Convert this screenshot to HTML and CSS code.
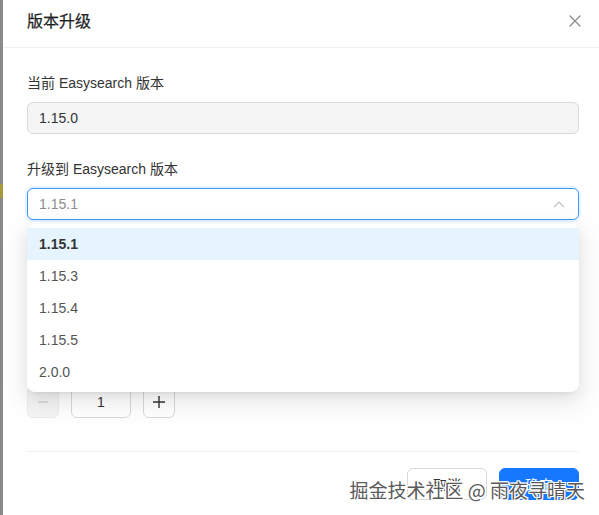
FILE: index.html
```html
<!DOCTYPE html>
<html lang="zh-CN">
<head>
<meta charset="utf-8">
<title>版本升级</title>
<link rel="stylesheet" href="styles.css">
</head>
<body>
<div class="backdrop"><span class="backdrop-mark"></span></div>
<div class="modal">
  <div class="modal-header">
    <div class="modal-title">版本升级</div>
    <button class="modal-close" aria-label="关闭">
      <svg width="12" height="12" viewBox="0 0 12 12"><path d="M1 1L11 11M11 1L1 11" stroke="#8c8c8c" stroke-width="1.3" fill="none" stroke-linecap="round"/></svg>
    </button>
  </div>
  <div class="modal-body">
    <div class="form-item">
      <div class="form-label">当前 Easysearch 版本</div>
      <div class="input input-disabled">1.15.0</div>
    </div>
    <div class="form-item">
      <div class="form-label">升级到 Easysearch 版本</div>
      <div class="select-wrap">
        <div class="select select-open">
          <span class="select-value">1.15.1</span>
          <svg class="select-arrow" width="12" height="8" viewBox="0 0 12 8"><path d="M1 7L6 2L11 7" stroke="#bfbfbf" stroke-width="1.2" fill="none"/></svg>
        </div>
        <div class="dropdown">
          <div class="option option-active">1.15.1</div>
          <div class="option">1.15.3</div>
          <div class="option">1.15.4</div>
          <div class="option">1.15.5</div>
          <div class="option">2.0.0</div>
        </div>
      </div>
    </div>
    <!-- rows that sit under the open dropdown -->
    <div class="form-item form-item-covered"></div>
    <div class="form-item form-item-stepper">
      <div class="stepper">
        <button class="step-btn step-disabled">
          <svg width="12" height="12" viewBox="0 0 12 12"><path d="M1 6H11" stroke="#d0d0d0" stroke-width="1.4"/></svg>
        </button>
        <div class="step-input">1</div>
        <button class="step-btn">
          <svg width="14" height="14" viewBox="0 0 14 14"><path d="M1 7H13M7 1V13" stroke="#333" stroke-width="1.4"/></svg>
        </button>
      </div>
    </div>
  </div>
  <div class="modal-footer">
    <button class="btn">取消</button>
    <button class="btn btn-primary">确定</button>
  </div>
  <div class="watermark">掘金技术社区 @ 雨夜寻晴天</div>
</div>
</body>
</html>
```
FILE: styles.css
```css
* { box-sizing: border-box; }

html, body {
  margin: 0;
  height: 100%;
}

body {
  display: flex;
  font-family: "Liberation Sans", "Noto Sans CJK SC", sans-serif;
  font-size: 14px;
  color: #262626;
  background: #fff;
  overflow: hidden;
}

.backdrop {
  width: 3px;
  flex: none;
  background: #8a8a8a;
  position: relative;
}

.backdrop-mark {
  position: absolute;
  left: 0;
  top: 184px;
  width: 3px;
  height: 14px;
  background: #a89a3a;
}

.modal {
  flex: 1;
  background: #fff;
  position: relative;
  display: flex;
  flex-direction: column;
}

.modal-header {
  height: 48px;
  padding: 9px 18px 0 24px;
  display: flex;
  justify-content: space-between;
  align-items: flex-start;
  border-bottom: 1px solid #f0f0f0;
}

.modal-title {
  font-family: "Noto Sans CJK SC", sans-serif;
  font-size: 16px;
  line-height: 22px;
  font-weight: 400;
  color: #1f1f1f;
  -webkit-text-stroke: 0.25px #1f1f1f;
}

.modal-close {
  border: 0;
  background: none;
  padding: 0;
  margin-top: 6px;
  width: 12px;
  height: 12px;
  display: flex;
}

.modal-body {
  padding: 24px 20px 0 24px;
}

.form-item {
  margin-bottom: 24px;
}

.form-item-covered {
  height: 88px;
}

.form-item-stepper {
  padding-top: 30px;
}

.form-label {
  line-height: 22px;
  padding-bottom: 8px;
  color: #333;
}

.input {
  height: 32px;
  border: 1px solid #d9d9d9;
  border-radius: 6px;
  padding: 0 11px;
  line-height: 30px;
  color: #333;
}

.input-disabled {
  background: #f5f5f5;
  color: #333;
}

.select-wrap {
  position: relative;
}

.select {
  height: 32px;
  border: 1px solid #d9d9d9;
  border-radius: 6px;
  padding: 0 11px;
  display: flex;
  align-items: center;
  justify-content: space-between;
}

.select-open {
  border-color: #4096ff;
  box-shadow: 0 0 0 2px rgba(5, 145, 255, 0.1);
}

.select-value {
  color: #8c8c8c;
}

.select-arrow {
  margin-right: 2px;
}

.dropdown {
  position: absolute;
  top: calc(100% + 4px);
  left: 0;
  right: 0;
  z-index: 2;
  background: #fff;
  border-radius: 8px;
  padding: 4px 0;
  box-shadow: 0 6px 16px 0 rgba(0, 0, 0, 0.08), 0 3px 6px -4px rgba(0, 0, 0, 0.12), 0 9px 28px 8px rgba(0, 0, 0, 0.05);
}

.option {
  height: 32px;
  line-height: 22px;
  padding: 5px 12px;
  color: #555;
}

.option-active {
  background: #e6f4ff;
  font-weight: 600;
  color: #333;
}

.stepper {
  display: flex;
  gap: 12px;
}

.step-btn {
  width: 32px;
  height: 32px;
  border: 1px solid #d9d9d9;
  border-radius: 6px;
  background: #fff;
  display: flex;
  align-items: center;
  justify-content: center;
  padding: 0;
}

.step-disabled {
  background: #f5f5f5;
  border-color: #ececec;
}

.step-input {
  width: 60px;
  height: 32px;
  border: 1px solid #d9d9d9;
  border-radius: 6px;
  text-align: center;
  line-height: 30px;
  color: #333;
}

.modal-footer {
  margin: 9px 20px 0 24px;
  padding-top: 16px;
  border-top: 1px solid #f0f0f0;
  display: flex;
  justify-content: flex-end;
  gap: 12px;
}

.btn {
  width: 80px;
  height: 32px;
  border: 1px solid #d9d9d9;
  border-radius: 6px;
  background: #fff;
  font-family: "Noto Sans CJK SC", sans-serif;
  font-size: 14px;
  color: #333;
  padding: 0;
}

.btn-primary {
  background: #1677ff;
  border-color: #1677ff;
  color: #fff;
}

.watermark {
  position: absolute;
  right: 14px;
  top: 477px;
  font-family: "Noto Sans CJK SC", sans-serif;
  font-size: 19px;
  line-height: 26px;
  color: #5a5a5a;
  white-space: nowrap;
  text-shadow: 1px 0 0 #fff, -1px 0 0 #fff, 0 1px 0 #fff, 0 -1px 0 #fff, 1px 1px 0 #fff, -1px -1px 0 #fff, 1px -1px 0 #fff, -1px 1px 0 #fff;
}
```
